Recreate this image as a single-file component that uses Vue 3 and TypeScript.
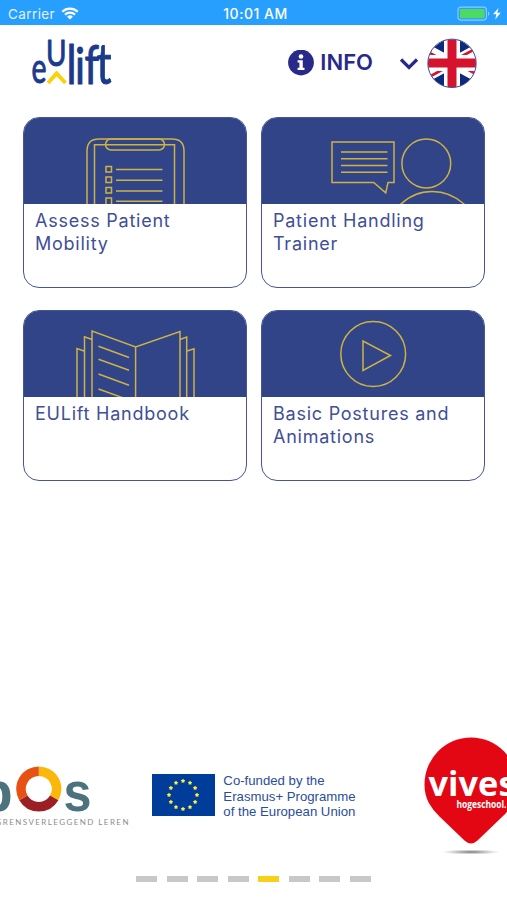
<script setup lang="ts">
interface Tile {
  id: 'assess' | 'trainer' | 'handbook' | 'postures'
  title: string
}

const tiles: Tile[] = [
  { id: 'assess', title: 'Assess Patient Mobility' },
  { id: 'trainer', title: 'Patient Handling Trainer' },
  { id: 'handbook', title: 'EULift Handbook' },
  { id: 'postures', title: 'Basic Postures and Animations' },
]

const slideCount = 8
const activeSlide = 5

const stars = Array.from({ length: 12 }, (_, i) => {
  const a = (i * Math.PI) / 6
  return { x: 31 + 14 * Math.sin(a), y: 21 - 14 * Math.cos(a) }
})

function starPoints(cx: number, cy: number): string {
  return Array.from({ length: 10 }, (_, i) => {
    const r = i % 2 === 0 ? 2.3 : 1.4
    const a = (i * Math.PI) / 5
    return `${(cx + r * Math.sin(a)).toFixed(2)},${(cy - r * Math.cos(a)).toFixed(2)}`
  }).join(' ')
}
</script>

<template>
  <div class="screen">
    <div class="status">
      <div class="status-left">
        <span>Carrier</span>
        <svg class="wifi" width="18" height="13" viewBox="0 0 18 13">
          <path d="M1.3 4.7a11 11 0 0 1 15.4 0M4 7.6a7.1 7.1 0 0 1 10 0" />
          <path class="wifi-dot" d="M9 12.6 6.1 9.8a4.1 4.1 0 0 1 5.8 0z" />
        </svg>
      </div>
      <span class="clock">10:01 AM</span>
      <div class="status-right">
        <svg width="46" height="16" viewBox="0 0 46 16">
          <rect x="1" y="1.100" width="28.400" height="13" rx="3" fill="none" stroke="#8fcbf8" stroke-width="1.1" />
          <rect x="2.800" y="2.900" width="24.800" height="9.400" rx="1.4" fill="#4cd964" />
          <path d="M31 5.500v4.400q1.400-.6 1.400-2.200t-1.400-2.200z" fill="#8fcbf8" />
          <path d="M41.500 2l-5.500 6.200h3.400l-1.200 5.200 5.500-6.600h-3.400z" fill="#fff" />
        </svg>
      </div>
    </div>

    <header class="header">
      <svg class="brand" width="84" height="56" viewBox="0 0 84 56">
        <text class="brand-text" x="1.500" y="46.300" font-size="42" textLength="15" lengthAdjust="spacingAndGlyphs">e</text>
        <text class="brand-text" x="16" y="29.300" font-size="37" textLength="20.500" lengthAdjust="spacingAndGlyphs">U</text>
        <text class="brand-text" x="36.500" y="46.500" font-size="54" textLength="10" lengthAdjust="spacingAndGlyphs">l</text>
        <text class="brand-text" x="45" y="46.500" font-size="50" textLength="10" lengthAdjust="spacingAndGlyphs">i</text>
        <text class="brand-text" x="54.500" y="46.500" font-size="54" textLength="14.500" lengthAdjust="spacingAndGlyphs">f</text>
        <text class="brand-text" x="66.500" y="46.500" font-size="56" textLength="15" lengthAdjust="spacingAndGlyphs">t</text>
        <path d="M18 46l8.600-9.600L35.500 46" fill="none" stroke="#fbd20a" stroke-width="3.800" />
      </svg>
      <div class="actions">
        <svg width="26" height="26" viewBox="0 0 26 26">
          <circle cx="13" cy="12.500" r="12.900" fill="#282a8a" />
          <circle cx="13" cy="6.500" r="2.300" fill="#fff" />
          <path d="M9.600 10.200h5.200v7.600h1.700v2.300H9.600v-2.300h1.800v-5.300H9.600z" fill="#fff" />
        </svg>
        <span class="info">INFO</span>
        <svg class="chevron" width="20" height="14" viewBox="0 0 20 14">
          <path d="M2 3.500l8 8 8-8" fill="none" stroke="#282a8a" stroke-width="3.200" />
        </svg>
        <svg class="flag" width="50" height="50" viewBox="0 0 50 50">
          <defs>
            <clipPath id="round"><circle cx="25" cy="25.500" r="24" /></clipPath>
          </defs>
          <g clip-path="url(#round)">
            <path d="M0 0h50v50H0z" fill="#0b2a7d" />
            <path d="M-12 5l74 40M62 5l-74 40" stroke="#fff" stroke-width="10.500" />
            <path d="M-12 7l37 20M62 3.500L25 23.500M-12 46.500l37-20M62 43L25 23" stroke="#d5132f" stroke-width="2.800" />
            <path d="M25 0v50M0 25h50" stroke="#fff" stroke-width="16" />
            <path d="M25 0v50M0 25h50" stroke="#d5132f" stroke-width="9" />
          </g>
          <circle cx="25" cy="25.300" r="24.200" fill="none" stroke="#46509a" />
        </svg>
      </div>
    </header>

    <main class="grid">
      <article v-for="tile in tiles" :key="tile.id" class="tile">
        <svg v-if="tile.id === 'assess'" class="art" width="222" height="86" viewBox="24 118 222 86">
          <path d="M87 206V151q0-12 12-12h73q12 0 12 12v55M94.500 206v-61.200h80V206" />
          <rect x="105.500" y="139" width="59" height="11" rx="5.500" />
          <path d="M106 166.500h5.500v5.500H106zM106 177h5.500v5.500H106zM106 187.500h5.500v5.500H106zM106 198h5.500v8H106zM116 169.600h46.500M116 180.300h46.500M116 190.900h46.500M116 201.300h46.500" />
        </svg>
        <svg v-else-if="tile.id === 'trainer'" class="art" width="222" height="86" viewBox="262 118 222 86">
          <path d="M332 142h62v40.500h-6l-2.300 10.300-12-10.300H332zM341 152h46.500M341 158.700h46.500M341 165.600h46.500M341 172.300h46.500" />
          <circle cx="426.300" cy="163.500" r="24.400" />
          <path d="M400 205c18-18 46-18 65 0" />
        </svg>
        <svg v-else-if="tile.id === 'handbook'" class="art" width="222" height="86" viewBox="24 311 222 86">
          <path d="M92 400v-69l43.600 16L180 331.500V400M135.600 347v53M91.500 339.300l-7-2.500V400M84 351l-7-2.500V400M180 339.500l6.700-2.500V400M187 351l7-2.300V400" />
          <path d="M98.500 346.300l30.500 11.200M98.500 359.300l30.500 11M98.500 374l30.500 11.300M98.500 389l30.500 11" />
        </svg>
        <svg v-else class="art" width="222" height="86" viewBox="262 311 222 86">
          <circle cx="373.200" cy="354" r="32.400" />
          <path d="M363 341v29.500l27.500-15z" />
        </svg>
        <h2 class="title">{{ tile.title }}</h2>
      </article>
    </main>

    <footer class="partners">
      <div class="logos">
        <svg class="bos" width="130" height="90" viewBox="0 750 130 90">
          <text x="-21.500" y="810.500" class="bos-letter">b</text>
          <g fill="none" stroke-width="9.600">
            <path d="M38.800 771.200a17.800 17.800 0 0 1 15.400 26.700" stroke="#fbb80b" />
            <path d="M54.200 797.900a17.800 17.800 0 0 1-30.800 0" stroke="#9b1f24" />
            <path d="M23.400 797.900a17.800 17.800 0 0 1 15.400-26.700" stroke="#e75113" />
          </g>
          <text x="63.500" y="810.500" class="bos-letter" textLength="28" lengthAdjust="spacingAndGlyphs">s</text>
          <text x="-4.500" y="824.800" class="bos-sub" textLength="133">GRENSVERLEGGEND LEREN</text>
        </svg>
        <div class="eu">
          <svg width="63" height="42" viewBox="0 0 63 42">
            <path d="M0 0h63v42H0z" fill="#003c99" />
            <polygon v-for="(s, i) in stars" :key="i" :points="starPoints(s.x, s.y)" fill="#ffef3a" />
          </svg>
          <p class="eu-text">Co-funded by the<br />Erasmus+ Programme<br />of the European Union</p>
        </div>
        <svg class="vives" width="84" height="120" viewBox="423 736 84 120">
          <defs>
            <radialGradient id="shade"><stop offset="0" stop-color="#777" /><stop offset="1" stop-color="#999" stop-opacity="0" /></radialGradient>
          </defs>
          <ellipse cx="471" cy="852" rx="29" ry="2.600" fill="url(#shade)" />
          <path d="M424.500 784.500a46.500 47 0 0 1 93 0c0 14-6 23-15 32l-25 24q-6.500 6-13 0l-25-24c-9-9-15-18-15-32z" fill="#e30613" />
          <text x="428.500" y="795.700" class="vives-name" textLength="87" lengthAdjust="spacingAndGlyphs">vives</text>
          <text x="456.500" y="807.500" class="vives-sub" textLength="50" lengthAdjust="spacingAndGlyphs">hogeschool.</text>
        </svg>
      </div>
      <div class="dots">
        <span v-for="n in slideCount" :key="n" class="dot" :class="{ active: n === activeSlide }"></span>
      </div>
    </footer>
  </div>
</template>

<style>
body {
  margin: 0;
  background: #fff;
}
</style>

<style scoped>
.screen {
  width: 507px;
  height: 900px;
  display: flex;
  flex-direction: column;
  overflow: hidden;
  background: #fff;
  font-family: Inter, "Liberation Sans", sans-serif;
}
.status {
  display: grid;
  grid-template-columns: 1fr auto 1fr;
  align-items: center;
  height: 25px;
  box-sizing: border-box;
  padding: 2px 4px 0 8px;
  background: #279fff;
  color: #fff;
  font-size: 13.500px;
}
.status-left {
  display: flex;
  align-items: center;
  gap: 6px;
  letter-spacing: 0.400px;
  color: #e2f2ff;
}
.wifi {
  fill: none;
  stroke: #fff;
  stroke-width: 2.200;
}
.wifi-dot {
  fill: #fff;
  stroke: none;
}
.clock {
  font-weight: 500;
  font-size: 14px;
  letter-spacing: 0.500px;
}
.status-right {
  display: flex;
  justify-content: flex-end;
}
.header {
  display: flex;
  justify-content: space-between;
  align-items: flex-start;
  height: 92px;
  box-sizing: border-box;
  padding: 12px 30px 0 30px;
}
.brand-text {
  font-family: Lato, sans-serif;
  font-weight: 400;
  fill: #1b3a8c;
  stroke: #1b3a8c;
  stroke-width: 1;
  stroke-linejoin: round;
}
.actions {
  display: flex;
  align-items: center;
  height: 52px;
}
.info {
  margin: -2px 26px 0 6px;
  font-size: 22px;
  font-weight: 600;
  color: #282a8a;
}
.chevron {
  margin-right: 8px;
}
.grid {
  display: grid;
  grid-template-columns: 224px 224px;
  grid-auto-rows: 171px;
  gap: 22px 14px;
  padding: 0 23px;
}
.tile {
  box-sizing: border-box;
  border: 1px solid #47549a;
  border-radius: 16px;
  overflow: hidden;
}
.art {
  display: block;
  background: #314487;
  fill: none;
  stroke: #cdb244;
  stroke-width: 1.500;
}
.title {
  margin: 0;
  padding: 5px 11px 0 11px;
  font-size: 18px;
  line-height: 23.400px;
  font-weight: 400;
  letter-spacing: 0.760px;
  color: #414e98;
}
.partners {
  margin-top: auto;
  height: 164px;
}
.logos {
  display: flex;
  justify-content: space-between;
  height: 120px;
}
.bos {
  margin-top: 14px;
}
.bos-letter {
  font: 700 56px "Liberation Sans", sans-serif;
  fill: #4c727e;
}
.bos-sub {
  font: 400 8px Lato, sans-serif;
  fill: #8d8d8d;
}
.eu {
  display: flex;
  align-items: flex-start;
  gap: 8px;
  margin: 38px 45px 0 0;
}
.eu-text {
  margin: -1px 0 0;
  font: 400 13.200px/15.700px "Liberation Sans", sans-serif;
  color: #2a4d9c;
  white-space: nowrap;
}
.vives-name {
  font: 700 34px "Open Sans", sans-serif;
  fill: #fff;
}
.vives-sub {
  font: 700 10.500px "Open Sans", sans-serif;
  fill: #fff;
}
.dots {
  display: flex;
  justify-content: center;
  gap: 9.600px;
  padding-top: 20px;
}
.dot {
  width: 21px;
  height: 6px;
  background: #c8c8c8;
}
.dot.active {
  background: #f7d117;
}
</style>
